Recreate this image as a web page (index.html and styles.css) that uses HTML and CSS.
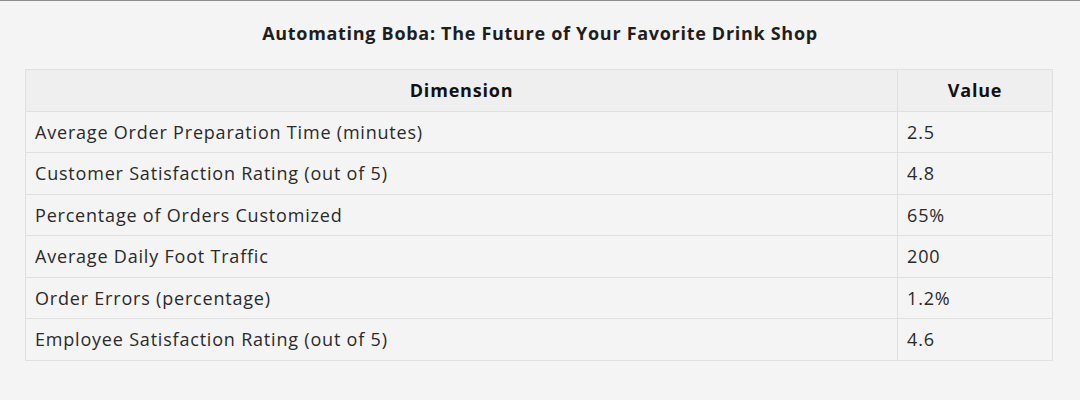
FILE: index.html
```html
<!DOCTYPE html>
<html lang="en">
<head>
<meta charset="utf-8">
<title>Automating Boba</title>
<link rel="stylesheet" href="styles.css">
</head>
<body>
<div class="page">
  <h1 class="title">Automating Boba: The Future of Your Favorite Drink Shop</h1>
  <table class="data">
    <thead>
      <tr><th class="col-dim">Dimension</th><th class="col-val">Value</th></tr>
    </thead>
    <tbody>
      <tr><td>Average Order Preparation Time (minutes)</td><td>2.5</td></tr>
      <tr><td>Customer Satisfaction Rating (out of 5)</td><td>4.8</td></tr>
      <tr><td>Percentage of Orders Customized</td><td>65%</td></tr>
      <tr><td>Average Daily Foot Traffic</td><td>200</td></tr>
      <tr><td>Order Errors (percentage)</td><td>1.2%</td></tr>
      <tr><td>Employee Satisfaction Rating (out of 5)</td><td>4.6</td></tr>
    </tbody>
  </table>
</div>
</body>
</html>
```
FILE: styles.css
```css
html, body {
  margin: 0;
  padding: 0;
  background: #f4f4f4;
}
body {
  border-top: 1px solid #8c8c8c;
  font-family: "Open Sans", "Liberation Sans", sans-serif;
  color: #222;
}
.page {
  padding-top: 21px;
}
.title {
  margin: 0 0 25px;
  font-size: 18px;
  line-height: 22px;
  font-weight: 700;
  letter-spacing: 0.7px;
  text-align: center;
  color: #1e1e1e;
}
.data {
  width: 1028px;
  margin: 0 0 0 25px;
  border-collapse: collapse;
  font-size: 18px;
  letter-spacing: 0.8px;
}
.data th, .data td {
  border: 1px solid #e0e0e0;
  padding: 10px 9px;
  line-height: 20.5px;
  text-align: left;
}
.data th {
  background: #efefef;
  font-weight: 700;
  text-align: center;
  color: #111;
}
.col-dim { width: 854px; }
.col-val { width: 136px; }
.data td { color: #2a2a2a; }
```
